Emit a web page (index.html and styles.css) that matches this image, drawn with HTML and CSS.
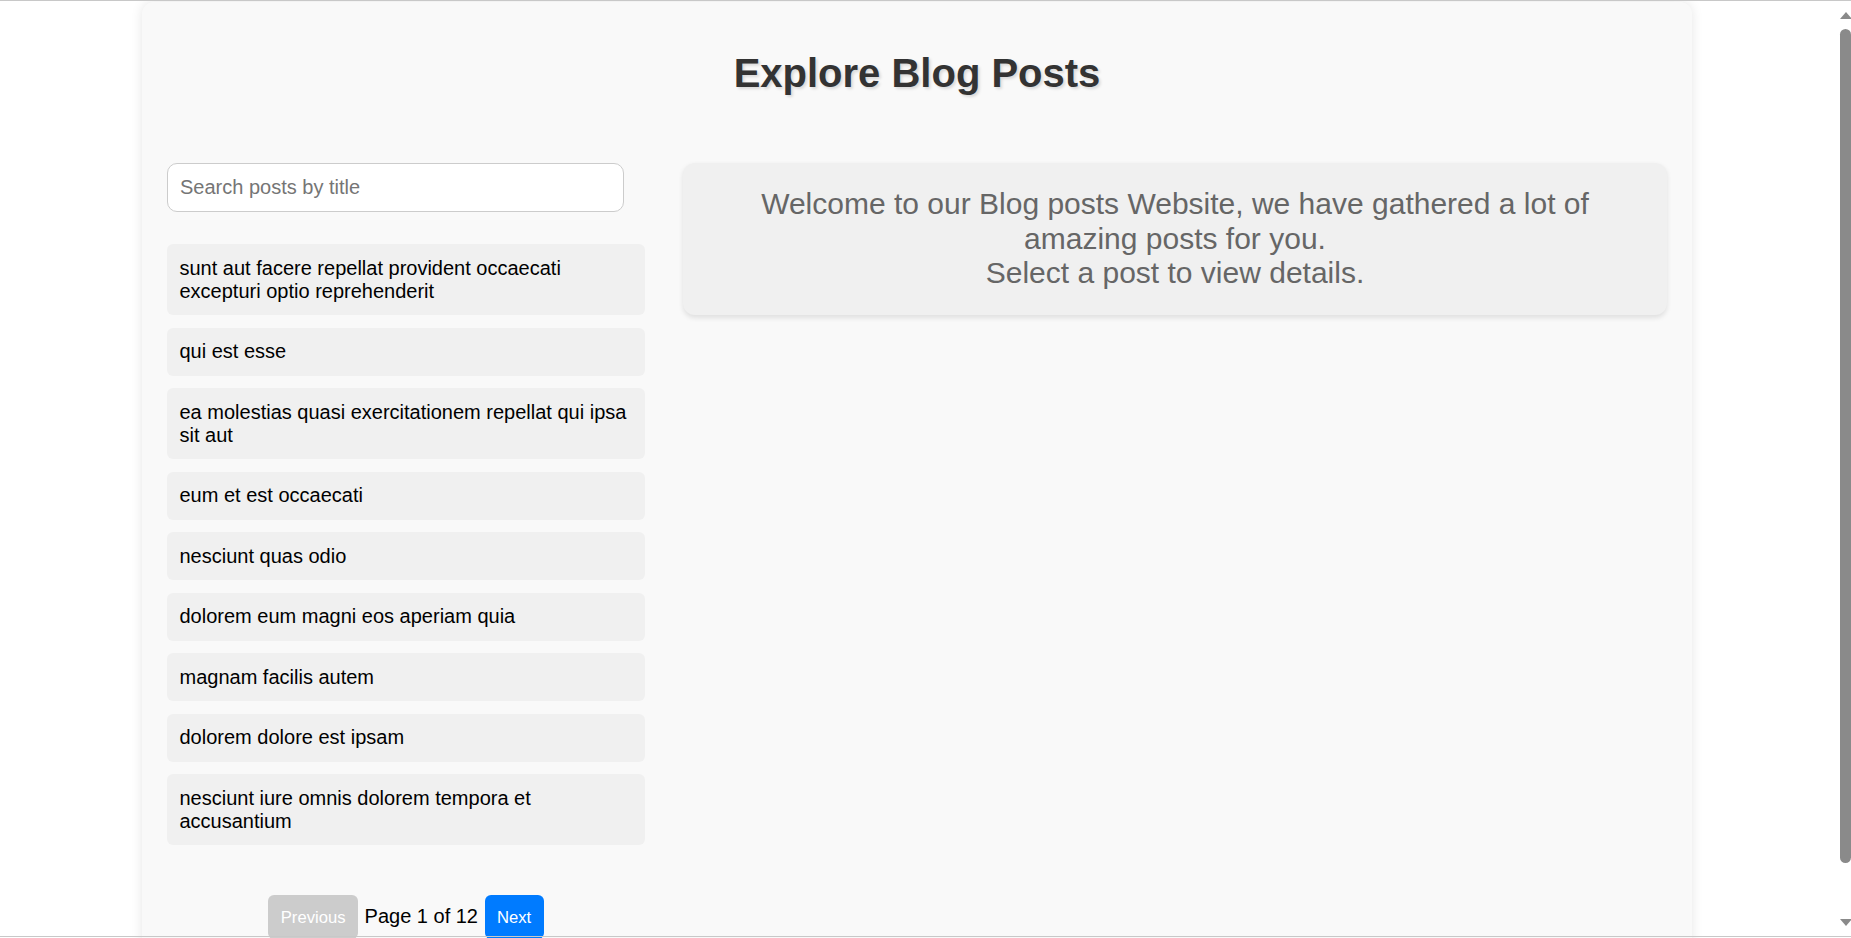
FILE: index.html
```html
<!DOCTYPE html>
<html lang="en">
<head>
<meta charset="utf-8">
<title>Explore Blog Posts</title>
<link rel="stylesheet" href="styles.css">
</head>
<body>
<div class="container">
  <h1 class="page-title">Explore Blog Posts</h1>
  <div class="layout">
    <aside class="sidebar">
      <input class="search" type="text" placeholder="Search posts by title">
      <ul class="post-list">
        <li class="post-item">sunt aut facere repellat provident occaecati excepturi optio reprehenderit</li>
        <li class="post-item">qui est esse</li>
        <li class="post-item">ea molestias quasi exercitationem repellat qui ipsa sit aut</li>
        <li class="post-item">eum et est occaecati</li>
        <li class="post-item">nesciunt quas odio</li>
        <li class="post-item">dolorem eum magni eos aperiam quia</li>
        <li class="post-item">magnam facilis autem</li>
        <li class="post-item">dolorem dolore est ipsam</li>
        <li class="post-item">nesciunt iure omnis dolorem tempora et accusantium</li>
      </ul>
      <div class="pagination">
        <button class="page-btn page-btn--disabled" disabled>Previous</button>
        <span class="page-info">Page 1 of 12</span>
        <button class="page-btn page-btn--primary">Next</button>
      </div>
    </aside>
    <main class="details">
      <div class="welcome">Welcome to our Blog posts Website, we have gathered a lot of amazing posts for you.<br>Select a post to view details.</div>
    </main>
  </div>
</div>
<div class="scrollbar" aria-hidden="true">
  <span class="scrollbar-arrow scrollbar-arrow--up"></span>
  <span class="scrollbar-thumb"></span>
  <span class="scrollbar-arrow scrollbar-arrow--down"></span>
</div>
</body>
</html>
```

FILE: styles.css
```css
html, body {
  margin: 0;
  padding: 0;
}

body {
  background: #fff;
  font-family: "Liberation Sans", Arial, sans-serif;
  padding-right: 17px;
}

body::before {
  content: "";
  position: fixed;
  left: 0;
  right: 0;
  top: 0;
  height: 1px;
  background: #c8c8c8;
  z-index: 10;
}

body::after {
  content: "";
  position: fixed;
  left: 0;
  right: 0;
  top: 936px;
  height: 1px;
  background: #c8c8c8;
  z-index: 10;
}

.container {
  box-sizing: content-box;
  width: 1500px;
  margin: 2px auto 0;
  padding: 25px;
  background: #f9f9f9;
  border-radius: 12px;
  box-shadow: 0 0 12px rgba(0, 0, 0, 0.1);
}

.page-title {
  margin: 23px 0 67px;
  text-align: center;
  font-size: 40px;
  line-height: 46px;
  font-weight: bold;
  color: #333;
  text-shadow: 2px 2px 3px rgba(0, 0, 0, 0.13);
}

.layout {
  display: flex;
  gap: 38px;
  align-items: flex-start;
}

.sidebar {
  width: 478px;
  flex: none;
}

.search {
  display: block;
  box-sizing: border-box;
  width: 457px;
  height: 49px;
  margin: 0 0 32px;
  padding: 0 12px;
  border: 1px solid #ccc;
  border-radius: 10px;
  background: #fff;
  font: 20px "Liberation Sans", Arial, sans-serif;
  color: #000;
  outline: none;
}

.search::placeholder {
  color: #757575;
}

.post-list {
  list-style: none;
  margin: 0;
  padding: 0;
}

.post-item {
  background: #f0f0f0;
  padding: 12.5px;
  margin-bottom: 12.5px;
  border-radius: 6px;
  font-size: 20px;
  line-height: 23px;
  color: #000;
}

.pagination {
  display: flex;
  justify-content: center;
  align-items: baseline;
  gap: 6.5px;
  margin-top: 50px;
}

.page-btn {
  font: 16.67px "Liberation Sans", Arial, sans-serif;
  line-height: 19px;
  padding: 12.5px;
  border: none;
  border-radius: 6px;
  color: #fff;
}

.page-btn--disabled {
  background: #ccc;
}

.page-btn--primary {
  background: #007bff;
}

.page-info {
  font-size: 20px;
  color: #000;
}

.details {
  flex: 1;
  min-width: 0;
}

.welcome {
  background: #f0f0f0;
  border-radius: 12px;
  box-shadow: 0 2.5px 5px rgba(0, 0, 0, 0.1);
  padding: 24px 25px 24px;
  text-align: center;
  font-size: 30px;
  line-height: 34.5px;
  color: #666;
}

.scrollbar {
  position: fixed;
  top: 0;
  right: 0;
  bottom: 0;
  width: 17px;
  background: #fff;
  z-index: 5;
}

.scrollbar-thumb {
  position: absolute;
  top: 29px;
  left: 6px;
  width: 11px;
  height: 834px;
  background: #8a8a8a;
  border-radius: 6px;
}

.scrollbar-arrow {
  position: absolute;
  left: 6px;
  width: 0;
  height: 0;
  border-left: 6px solid transparent;
  border-right: 6px solid transparent;
}

.scrollbar-arrow--up {
  top: 12px;
  border-bottom: 7px solid #8a8a8a;
}

.scrollbar-arrow--down {
  top: 919px;
  border-top: 7px solid #8a8a8a;
}
```
